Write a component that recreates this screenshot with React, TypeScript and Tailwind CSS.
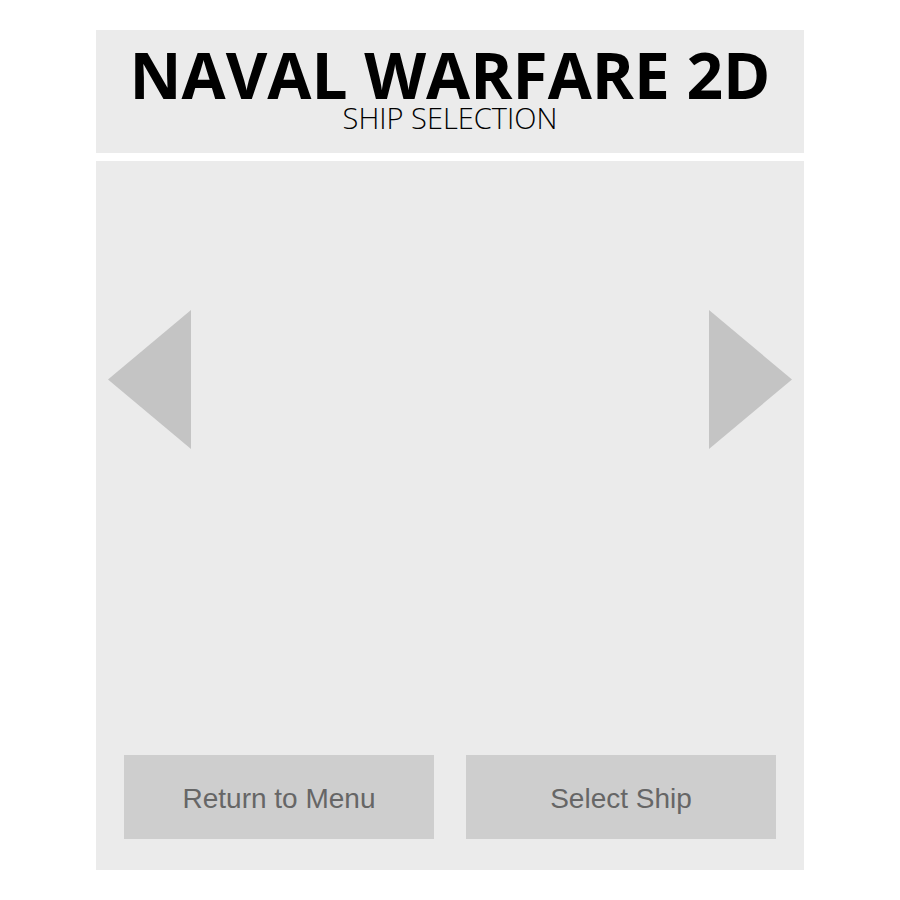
export default function App() {
  return (
    <div className="w-[900px] h-[900px] bg-white flex justify-center">
      <div className="w-[708px] mt-[30px] flex flex-col gap-[8px]">
        <div className="h-[123px] bg-[#ebebeb] flex flex-col items-center pt-[16px]">
          <div className="text-[64px] leading-[58px] font-bold text-black" style={{ fontFamily: '"Open Sans", sans-serif' }}>
            NAVAL WARFARE 2D
          </div>
          <div className="text-[29px] leading-[28px] font-light text-black" style={{ fontFamily: '"Open Sans", sans-serif' }}>
            SHIP SELECTION
          </div>
        </div>
        <div className="h-[709px] bg-[#ebebeb] flex flex-col">
          <div className="flex justify-between px-[12px] pt-[149px]">
            <svg width="83" height="139" viewBox="0 0 83 139">
              <polygon points="83,0 83,139 0,69.5" fill="#c4c4c4" />
            </svg>
            <svg width="83" height="139" viewBox="0 0 83 139">
              <polygon points="0,0 0,139 83,69.5" fill="#c4c4c4" />
            </svg>
          </div>
          <div className="flex-1" />
          <div className="flex gap-[32px] px-[28px] pb-[31px]">
            <button className="w-[310px] h-[84px] pt-[3px] bg-[#cecece] text-[#666666] text-[28px]" style={{ fontFamily: '"Liberation Sans", Arial, sans-serif' }}>
              Return to Menu
            </button>
            <button className="w-[310px] h-[84px] pt-[3px] bg-[#cecece] text-[#666666] text-[28px]" style={{ fontFamily: '"Liberation Sans", Arial, sans-serif' }}>
              Select Ship
            </button>
          </div>
        </div>
      </div>
    </div>
  );
}
